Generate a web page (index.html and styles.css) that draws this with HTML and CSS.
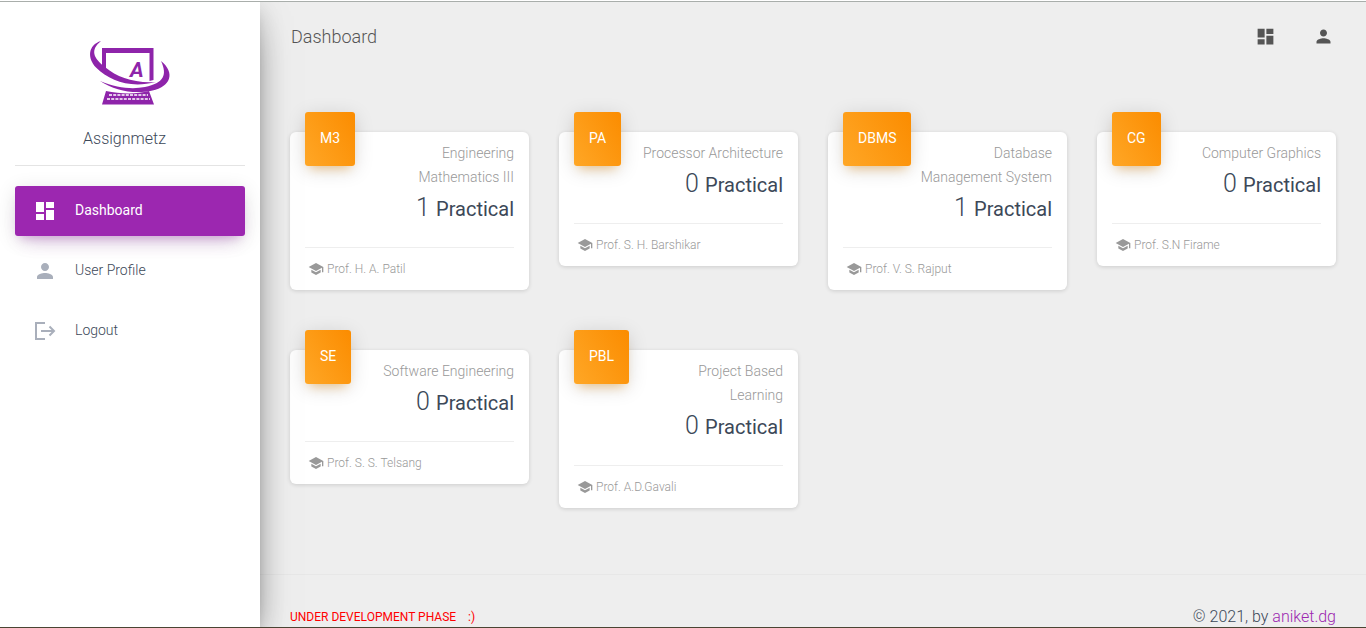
FILE: index.html
```html
<!DOCTYPE html>
<html lang="en">
<head>
<meta charset="utf-8">
<title>Assignmetz</title>
<meta name="viewport" content="width=device-width, initial-scale=1">
<link rel="stylesheet" href="styles.css">
</head>
<body>
<svg class="sprite" aria-hidden="true">
  <symbol id="i-dashboard" viewBox="0 0 24 24"><path d="M3 13h8V3H3v10zm0 8h8v-6H3v6zm10 0h8V11h-8v10zm0-18v6h8V3h-8z"/></symbol>
  <symbol id="i-person" viewBox="0 0 24 24"><path d="M12 12c2.21 0 4-1.79 4-4s-1.79-4-4-4-4 1.79-4 4 1.790 4 4 4zm0 2c-2.670 0-8 1.340-8 4v2h16v-2c0-2.660-5.330-4-8-4z"/></symbol>
  <symbol id="i-school" viewBox="0 0 24 24"><path d="M5 13.180v4L12 21l7-3.820v-4L12 17l-7-3.820zM12 3L1 9l11 6 9-4.910V17h2V9L12 3z"/></symbol>
  <symbol id="i-logout" viewBox="0 0 24 24"><path d="M12 4H3v16h9M8 12h13M16.500 7.500L21 12l-4.500 4.500" fill="none" stroke="currentColor" stroke-width="2"/></symbol>
</svg>
<div class="page">
  <aside class="sidebar">
    <div class="brand">
      <svg class="brand-logo" viewBox="0 0 100 90" role="img" aria-label="Assignmetz logo">
        <path d="M22 18H73.500V50L69.500 51V23H26V41L22 38Z"/>
        <path d="M21 11C8 15 7 28 16 37.500C30 51 50 58.500 76 52C54 53.500 37 47 25.500 37.500C13 28 10 20 21 11Z"/>
        <path d="M81 31C96 43 90 57 72.500 60.500C55 64.500 35 61 20 51C37 58 52 59.500 65 57C84 53 87.500 45 81 31Z"/>
        <path d="M26 61C40 64 56 64.500 69 61L74 74.500H22Z"/>
        <path d="M29 65H68M27 69H70" fill="none" stroke="#fff" stroke-width="1.300" stroke-dasharray="3 1.200"/>
        <text class="brand-letter" x="50" y="47">A</text>
      </svg>
      <a class="brand-name" href="#">Assignmetz</a>
    </div>
    <nav class="nav">
      <a class="nav-link active" href="#"><svg class="icon"><use href="#i-dashboard"/></svg><span>Dashboard</span></a>
      <a class="nav-link" href="#"><svg class="icon"><use href="#i-person"/></svg><span>User Profile</span></a>
      <a class="nav-link" href="#"><svg class="icon"><use href="#i-logout"/></svg><span>Logout</span></a>
    </nav>
  </aside>
  <div class="main">
    <header class="topbar">
      <h1 class="topbar-title">Dashboard</h1>
      <div class="topbar-actions">
        <button class="icon-button" type="button" aria-label="Dashboard"><svg class="icon"><use href="#i-dashboard"/></svg></button>
        <button class="icon-button" type="button" aria-label="Account"><svg class="icon"><use href="#i-person"/></svg></button>
      </div>
    </header>
    <main class="cards">
      <article class="card">
        <div class="card-head"><span class="badge">M3</span><div class="info"><p class="subject">Engineering Mathematics III</p><h2 class="count">1 <small>Practical</small></h2></div></div>
        <div class="card-foot"><svg class="icon"><use href="#i-school"/></svg>Prof. H. A. Patil</div>
      </article>
      <article class="card">
        <div class="card-head"><span class="badge">PA</span><div class="info"><p class="subject">Processor Architecture</p><h2 class="count">0 <small>Practical</small></h2></div></div>
        <div class="card-foot"><svg class="icon"><use href="#i-school"/></svg>Prof. S. H. Barshikar</div>
      </article>
      <article class="card">
        <div class="card-head"><span class="badge">DBMS</span><div class="info"><p class="subject">Database Management System</p><h2 class="count">1 <small>Practical</small></h2></div></div>
        <div class="card-foot"><svg class="icon"><use href="#i-school"/></svg>Prof. V. S. Rajput</div>
      </article>
      <article class="card">
        <div class="card-head"><span class="badge">CG</span><div class="info"><p class="subject">Computer Graphics</p><h2 class="count">0 <small>Practical</small></h2></div></div>
        <div class="card-foot"><svg class="icon"><use href="#i-school"/></svg>Prof. S.N Firame</div>
      </article>
      <article class="card">
        <div class="card-head"><span class="badge">SE</span><div class="info"><p class="subject">Software Engineering</p><h2 class="count">0 <small>Practical</small></h2></div></div>
        <div class="card-foot"><svg class="icon"><use href="#i-school"/></svg>Prof. S. S. Telsang</div>
      </article>
      <article class="card">
        <div class="card-head"><span class="badge">PBL</span><div class="info"><p class="subject">Project Based<br>Learning</p><h2 class="count">0 <small>Practical</small></h2></div></div>
        <div class="card-foot"><svg class="icon"><use href="#i-school"/></svg>Prof. A.D.Gavali</div>
      </article>
    </main>
    <footer class="footer">
      <p class="notice"><span>Under development phase</span><span>:)</span></p>
      <p class="credit">© 2021, by <a href="#">aniket.dg</a></p>
    </footer>
  </div>
</div>
</body>
</html>
```

FILE: styles.css
```css
* { box-sizing: border-box; }

body {
  margin: 0;
  padding-top: 1px;
  background: #fff;
  color: #3c4858;
  font-family: Roboto, "Liberation Sans", sans-serif;
  font-size: 14px;
  font-weight: 300;
  line-height: 24px;
}

h1, h2, p { margin: 0; }
a { text-decoration: none; }

.sprite { display: none; }

.icon {
  flex: none;
  width: 24px;
  height: 24px;
  fill: currentColor;
}

.page {
  display: flex;
  min-height: calc(100vh - 1px);
  border-top: 1px solid #a9aeab;
  border-bottom: 1px solid #4a4433;
  background: #eee;
}

/* Sidebar */
.sidebar {
  position: relative;
  flex: none;
  width: 260px;
  background: #fff;
  box-shadow: 0 16px 38px -12px rgba(0, 0, 0, .56), 0 4px 25px 0 rgba(0, 0, 0, .12), 0 8px 10px -5px rgba(0, 0, 0, .2);
  clip-path: inset(0 -60px 0 0);
}

.brand {
  display: flex;
  flex-direction: column;
  align-items: center;
  margin: 0 15px;
  padding: 28px 0 14px;
  border-bottom: 1px solid #e4e4e4;
}

.brand-logo {
  width: 100px;
  height: 90px;
  fill: #8e24aa;
}

.brand-letter {
  font: italic bold 21px "Liberation Sans Narrow", Roboto, sans-serif;
}

.brand-name {
  padding: 7px 11px 0 0;
  color: #3c4858;
  font-size: 16px;
}

.nav {
  display: flex;
  flex-direction: column;
  gap: 10px;
  margin: 20px 15px;
}

.nav-link {
  display: flex;
  align-items: center;
  gap: 18px;
  height: 50px;
  padding: 0 18px;
  border-radius: 3px;
  color: #3c4858;
}

.nav-link span { padding-bottom: 2px; }
.nav-link .icon { color: #a9afbb; }

.nav-link.active {
  background: #9c27b0;
  color: #fff;
  font-weight: 400;
  box-shadow: 0 12px 20px -10px rgba(156, 39, 176, .28), 0 4px 20px 0 rgba(0, 0, 0, .12), 0 7px 8px -5px rgba(156, 39, 176, .2);
}

.nav-link.active .icon { color: #fff; }

/* Main column */
.main {
  display: flex;
  flex: 1;
  flex-direction: column;
  min-width: 0;
}

.topbar {
  display: flex;
  align-items: center;
  justify-content: space-between;
  height: 68px;
  padding: 0 23px 0 31px;
}

.topbar-title {
  padding-top: 2px;
  color: #555;
  font-size: 18px;
  font-weight: 300;
}

.topbar-actions {
  display: flex;
  gap: 18px;
}

.icon-button {
  display: flex;
  align-items: center;
  justify-content: center;
  width: 40px;
  height: 40px;
  padding: 0;
  border: 0;
  background: none;
  color: #555;
}

.icon-button .icon { width: 21px; height: 21px; }

/* Cards */
.cards {
  display: grid;
  grid-template-columns: repeat(auto-fill, minmax(220px, 1fr));
  align-items: start;
  gap: 60px 30px;
  padding: 62px 30px 66px;
}

.card {
  padding: 0 15px 10px;
  border-radius: 6px;
  background: #fff;
  box-shadow: 0 1px 4px 0 rgba(0, 0, 0, .14);
}

.card-head {
  display: flex;
  align-items: flex-start;
  justify-content: space-between;
  gap: 8px;
}

.badge {
  flex: none;
  margin-top: -20px;
  padding: 14px 15px 16px;
  border-radius: 3px;
  background: linear-gradient(60deg, #ffa726, #fb8c00);
  box-shadow: 0 4px 20px 0 rgba(0, 0, 0, .14), 0 7px 10px -5px rgba(255, 152, 0, .4);
  color: #fff;
  font-weight: 400;
}

.info {
  padding-top: 9px;
  text-align: right;
}

.subject { color: #999; }

.count {
  font-size: 25px;
  font-weight: 300;
  line-height: 38px;
}

.count small {
  font-size: 20px;
  font-weight: 400;
}

.card-foot {
  display: flex;
  align-items: center;
  gap: 3px;
  margin-top: 19px;
  padding: 10px 3px 0;
  border-top: 1px solid #eee;
  color: #999;
  font-size: 12px;
  line-height: 22px;
}

.card-foot .icon { width: 16px; height: 16px; }

/* Footer */
.footer {
  display: flex;
  align-items: center;
  justify-content: space-between;
  margin-top: auto;
  padding: 32px 30px 0;
  border-top: 1px solid #e7e7e7;
  line-height: 20px;
}

.notice {
  display: flex;
  gap: 12px;
  color: #f00;
  font-size: 12px;
  font-weight: 400;
  text-transform: uppercase;
}

.credit { font-size: 16px; }
.credit a { color: #9c27b0; }
```
